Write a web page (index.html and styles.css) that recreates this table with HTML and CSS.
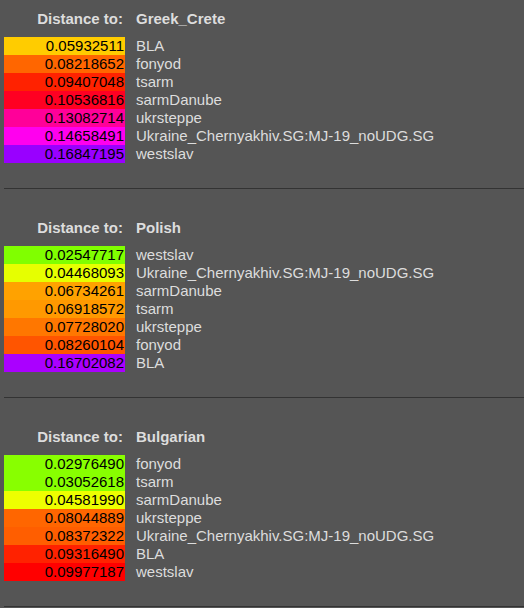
FILE: index.html
```html
<!DOCTYPE html>
<html>
<head>
<meta charset="utf-8">
<link rel="stylesheet" href="styles.css">
</head>
<body>
<section class="block">
  <table class="dist">
    <thead><tr><th class="lbl">Distance to:</th><th class="target">Greek_Crete</th></tr></thead>
    <tbody>
      <tr><td class="val" style="background:#ffcc00">0.05932511</td><td class="name">BLA</td></tr>
      <tr><td class="val" style="background:#ff6600">0.08218652</td><td class="name">fonyod</td></tr>
      <tr><td class="val" style="background:#ff2200">0.09407048</td><td class="name">tsarm</td></tr>
      <tr><td class="val" style="background:#ff0022">0.10536816</td><td class="name">sarmDanube</td></tr>
      <tr><td class="val" style="background:#ff0099">0.13082714</td><td class="name">ukrsteppe</td></tr>
      <tr><td class="val" style="background:#ff00ee">0.14658491</td><td class="name">Ukraine_Chernyakhiv.SG:MJ-19_noUDG.SG</td></tr>
      <tr><td class="val" style="background:#9900ff">0.16847195</td><td class="name">westslav</td></tr>
    </tbody>
  </table>
  <hr class="rule">
</section>
<section class="block">
  <table class="dist">
    <thead><tr><th class="lbl">Distance to:</th><th class="target">Polish</th></tr></thead>
    <tbody>
      <tr><td class="val" style="background:#80ff00">0.02547717</td><td class="name">westslav</td></tr>
      <tr><td class="val" style="background:#e6ff00">0.04468093</td><td class="name">Ukraine_Chernyakhiv.SG:MJ-19_noUDG.SG</td></tr>
      <tr><td class="val" style="background:#ffa200">0.06734261</td><td class="name">sarmDanube</td></tr>
      <tr><td class="val" style="background:#ff9900">0.06918572</td><td class="name">tsarm</td></tr>
      <tr><td class="val" style="background:#ff7700">0.07728020</td><td class="name">ukrsteppe</td></tr>
      <tr><td class="val" style="background:#ff5500">0.08260104</td><td class="name">fonyod</td></tr>
      <tr><td class="val" style="background:#aa00ff">0.16702082</td><td class="name">BLA</td></tr>
    </tbody>
  </table>
  <hr class="rule">
</section>
<section class="block">
  <table class="dist">
    <thead><tr><th class="lbl">Distance to:</th><th class="target">Bulgarian</th></tr></thead>
    <tbody>
      <tr><td class="val" style="background:#88ff00">0.02976490</td><td class="name">fonyod</td></tr>
      <tr><td class="val" style="background:#88ff00">0.03052618</td><td class="name">tsarm</td></tr>
      <tr><td class="val" style="background:#eeff00">0.04581990</td><td class="name">sarmDanube</td></tr>
      <tr><td class="val" style="background:#ff6600">0.08044889</td><td class="name">ukrsteppe</td></tr>
      <tr><td class="val" style="background:#ff5e00">0.08372322</td><td class="name">Ukraine_Chernyakhiv.SG:MJ-19_noUDG.SG</td></tr>
      <tr><td class="val" style="background:#ff2200">0.09316490</td><td class="name">BLA</td></tr>
      <tr><td class="val" style="background:#ff0000">0.09977187</td><td class="name">westslav</td></tr>
    </tbody>
  </table>
  <hr class="rule">
</section>
</body>
</html>
```

FILE: styles.css
```css
html, body {
  margin: 0;
  padding: 0;
  background: #555555;
}
body {
  font-family: "Liberation Sans", Arial, sans-serif;
  font-size: 15px;
  line-height: 18px;
  color: #dddddd;
}
.block {
  padding-top: 10px;
}
.dist {
  border-collapse: collapse;
  border-spacing: 0;
  margin-left: 4px;
}
.dist th {
  font-weight: bold;
  padding: 0 0 9px 0;
  height: 18px;
  vertical-align: top;
}
.dist th.lbl {
  text-align: right;
  width: 119px;
  padding-right: 2px;
}
.dist th.target {
  text-align: left;
  padding-left: 11px;
}
.dist td {
  padding: 0;
  height: 18px;
  white-space: nowrap;
}
.dist td.val {
  color: #000000;
  text-align: right;
  padding-right: 1px;
}
.dist td.name {
  padding-left: 11px;
  color: #dddddd;
}
.rule {
  border: none;
  border-top: 1px solid #333333;
  height: 0;
  margin: 25px 0 20px 4px;
}
```
